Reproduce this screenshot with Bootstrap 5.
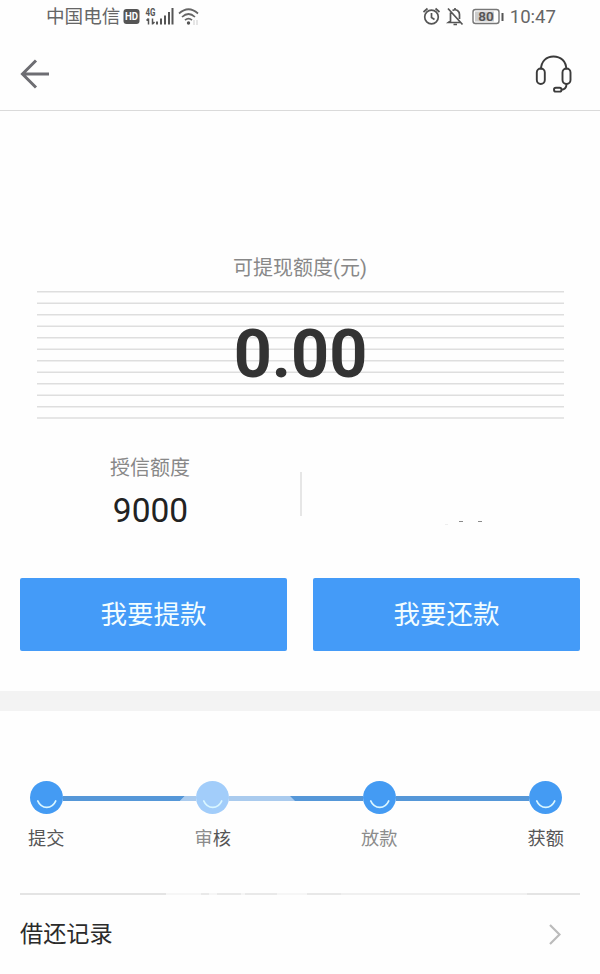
<!DOCTYPE html>
<html lang="zh-CN">
<head>
<meta charset="utf-8">
<meta name="viewport" content="width=device-width, initial-scale=1">
<title>可提现额度</title>
<link href="https://cdn.jsdelivr.net/npm/bootstrap@5.3.0/dist/css/bootstrap.min.css" rel="stylesheet">
<style>
  body { font-family: Roboto, "Noto Sans CJK SC", sans-serif; color: #333; background: #fefefe; height: 974px; overflow: hidden; }
  svg { display: block; flex: none; }
  .status { height: 34px; padding: 1px 44px 0 46px; color: #666; font-size: 18.6px; line-height: 33px; }
  .status svg { margin-top: -1px; }
  .topbar { height: 77px; padding: 4px 27px 0 20px; border-bottom: 1px solid #dadada; }
  .quota { padding-top: 144px; }
  .quota-label { font-size: 20px; line-height: 26px; color: #888; }
  .ruled { margin: 10px 36px 0 37px; height: 128px; }
  .ruled svg { grid-area: 1 / 1; }
  .amount { grid-area: 1 / 1; font-size: 66.5px; line-height: 127px; font-weight: 700; color: #333; }
  .credit { margin-top: 34px; height: 92px; }
  .credit-label { font-size: 20px; line-height: 28px; color: #888; margin-top: 1px; }
  .credit-value { font-size: 33.5px; line-height: 40px; color: #222; margin-top: 9px; padding-left: 1px; }
  .rule-v { width: 2px; height: 44px; margin-top: 19px; background: #e6e6e6; }
  .actions { padding: 0 20px; margin-top: 33px; gap: 26px; }
  .btn-act { --bs-btn-color: #f2fdff; --bs-btn-bg: #449bf8; --bs-btn-hover-bg: #3389e8; --bs-btn-hover-color: #fff; --bs-btn-border-radius: 2px; height: 73px; font-size: 26.5px; line-height: 1; border: 0; padding: 1px 0 0; }
  .band { height: 20px; background: #f3f3f3; margin-top: 40px; }
  .track { padding: 0 38px 0 30px; margin-top: 70px; }
  .seg { height: 5px; background: #5597d8; margin-top: 2px; }
  .seg-in { background: linear-gradient(135deg, #5597d8 85.6px, #aacbee 86.4px); }
  .seg-out { background: linear-gradient(45deg, #aacbee 46.3px, #5597d8 47.1px); }
  .names { padding: 0 36px 0 28px; margin-top: 12px; font-size: 18.2px; line-height: 26px; color: #555; }
  .faded { color: #8c8c8c; }
  .divider { height: 2px; margin: 41px 20px 0; background: linear-gradient(90deg, #e4e4e4 146px, #f6f6f6 146px 181px, #e9e9e9 181px 189px, #f6f6f6 189px 197px, #e9e9e9 197px 221px, #f6f6f6 221px 225px, #e9e9e9 225px 257px, #f6f6f6 257px 287px, #e8e8e8 287px 321px, #f0f0f0 321px 507px, #e4e4e4 507px); }
  .records { margin: 0 20px; height: 78px; font-size: 23.2px; color: #2b2b2b; padding-right: 19px; }
</style>
<script src="https://cdn.jsdelivr.net/npm/bootstrap@5.3.0/dist/js/bootstrap.bundle.min.js"></script>
</head>
<body>
<div class="status d-flex align-items-center justify-content-between">
  <div class="d-flex align-items-center">
    <span>中国电信</span>
    <svg width="82" height="22" viewBox="120.500 6 82 22" fill="#555">
      <rect x="124" y="9" width="16" height="15" rx="3"/>
      <text x="132" y="20.300" font-size="10" font-weight="700" fill="#fff" text-anchor="middle" textLength="13" lengthAdjust="spacingAndGlyphs">HD</text>
      <text x="146" y="15.800" font-size="10" font-weight="700" textLength="10" lengthAdjust="spacingAndGlyphs">4G</text>
      <path d="M149 18.500v6M147 20.500l2-2M153 18.500v6M153 24l2-2" fill="none" stroke="#555" stroke-width="1.500"/>
      <path d="M156.500 21.500h2v3h-2zM160.500 18.500h2v6h-2zM164.500 15.500h2v9h-2zM168.500 12h2v12.500h-2zM172 8h2v16.500h-2z"/>
      <g fill="none" stroke="#666" stroke-width="1.700"><path d="M179.500 13.500Q189 5 198.500 13.500M182.500 17Q189 11 195.500 17M185.500 20.200Q189 17 192.500 20.200"/></g>
      <circle cx="189" cy="23" r="1.700"/>
      <path d="M194.500 20v5M197.500 20v5" stroke="#ccc" stroke-width="1"/>
    </svg>
  </div>
  <div class="d-flex align-items-center">
    <svg width="87" height="22" viewBox="423 6 87 22" fill="none" stroke="#555" stroke-width="1.700">
      <circle cx="431.500" cy="17" r="6.800"/><path d="M431.500 13v4.500l3 2M423.500 12l4-3.500M439.500 12l-4-3.500"/>
      <path d="M448 8.500l14.500 16M450.500 12.500v8.500l-2 1.500h11.500M452.500 10.500q2.500-1.500 5 0q2 1.500 2 4v4.500M453.500 24.500h3.500M455 8v2"/>
      <rect x="473" y="9.500" width="26" height="14" rx="2.500" stroke="#777" stroke-width="1.400"/>
      <rect x="475" y="11.500" width="19" height="10" fill="#ccc" stroke="none"/>
      <path d="M502.500 13v8" stroke-width="2"/>
      <text x="486" y="21.200" font-size="13.500" font-weight="600" fill="#555" stroke="none" text-anchor="middle">80</text>
    </svg>
    <span>10:47</span>
  </div>
</div>

<header class="topbar d-flex align-items-center justify-content-between">
  <svg width="30" height="32" viewBox="20 57.500 30 32" fill="none" stroke="#6d6d72" stroke-width="3"><path d="M49 73.500H22.500M36 60L22.500 73.500L36 87"/></svg>
  <svg width="38" height="40" viewBox="535 54 38 40" fill="none" stroke="#3b3b3b" stroke-width="1.900">
    <path d="M541 69.500C541 61 546.500 56.500 553.500 56.500S566.300 61 566.300 69.500M566.500 84C566.500 88 564.500 89.700 561 89.700"/>
    <rect x="536.800" y="68.500" width="8" height="15.500" rx="4"/><rect x="562.500" y="68.500" width="8" height="15.500" rx="4"/>
    <rect x="554" y="87.800" width="7.500" height="3.800" rx="1.900"/>
  </svg>
</header>

<main>
  <section class="quota text-center">
    <div class="quota-label">可提现额度(元)</div>
    <div class="ruled d-grid">
      <svg width="527" height="128" stroke="#dedede" stroke-width="1.500">
        <path d="M0 .7H527M0 12.200H527M0 23.700H527M0 35.200H527M0 46.700H527M0 58.200H527M0 69.700H527M0 81.200H527M0 92.700H527M0 104.200H527M0 115.700H527M0 127.100H527"/>
      </svg>
      <div class="amount">0.00</div>
    </div>
    <div class="credit d-flex">
      <div class="w-50">
        <div class="credit-label">授信额度</div>
        <div class="credit-value">9000</div>
      </div>
      <div class="rule-v"></div>
      <svg width="298" height="92" stroke="#8a8a8a" stroke-width="1"><path d="M157 68.500h4M176 68.500h4"/><path d="M143 71.500h3" stroke="#eee"/></svg>
    </div>
  </section>

  <div class="actions d-flex">
    <button type="button" class="btn btn-act flex-fill">我要提款</button>
    <button type="button" class="btn btn-act flex-fill">我要还款</button>
  </div>

  <div class="band"></div>

  <svg width="0" height="0" class="position-absolute">
    <symbol id="smile" viewBox="0 0 33 33"><circle cx="16.500" cy="16.500" r="16.500"/><path d="M7.800 20C11.500 28.500 22 28.500 25.700 20" fill="none" stroke="#d9f6ff" stroke-width="1.800" stroke-linecap="round"/></symbol>
  </svg>
  <div class="track d-flex align-items-center">
    <svg width="33" height="33" fill="#449bf3"><use href="#smile"/></svg>
    <div class="seg seg-in flex-fill"></div>
    <svg width="33" height="33" fill="#a2cdfa"><use href="#smile"/></svg>
    <div class="seg seg-out flex-fill"></div>
    <svg width="33" height="33" fill="#449bf3"><use href="#smile"/></svg>
    <div class="seg flex-fill"></div>
    <svg width="33" height="33" fill="#449bf3"><use href="#smile"/></svg>
  </div>
  <div class="names d-flex justify-content-between">
    <span>提交</span><span><span class="faded">审</span>核</span><span class="faded">放款</span><span>获额</span>
  </div>

  <div class="divider"></div>
  <div class="records d-flex align-items-center justify-content-between">
    <span>借还记录</span>
    <svg width="12" height="22" fill="none" stroke="#bbb" stroke-width="2.200"><path d="M1 2L10.500 11.500L1 21"/></svg>
  </div>
</main>
</body>
</html>
